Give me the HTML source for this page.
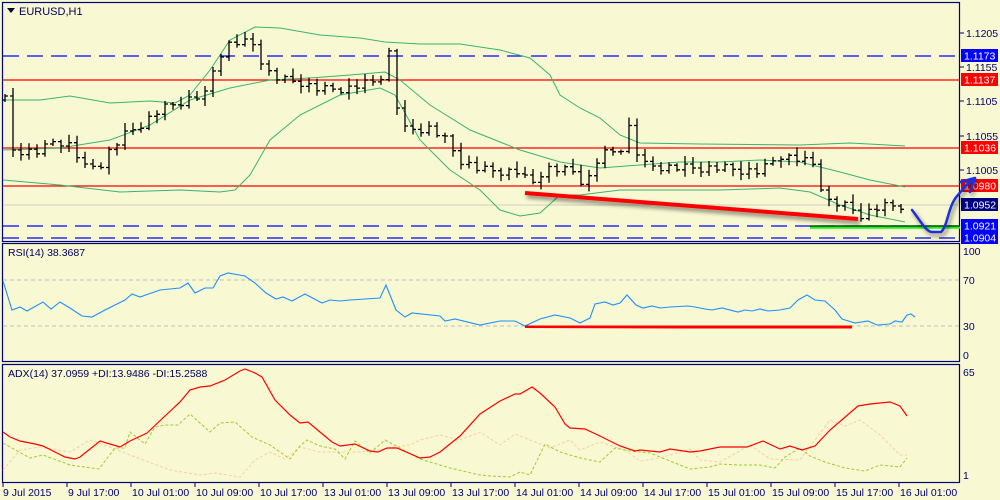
<!DOCTYPE html>
<html><head><meta charset="utf-8"><style>
html,body{margin:0;padding:0;background:#f8f8d2;}
svg{display:block;font-family:"Liberation Sans",sans-serif;}
</style></head><body>
<svg id="s" width="1000" height="500" viewBox="0 0 1000 500" xmlns="http://www.w3.org/2000/svg">
<rect width="1000" height="500" fill="#f8f8d2"/>
<defs><filter id="sh" x="-5%" y="-50%" width="110%" height="300%"><feGaussianBlur in="SourceAlpha" stdDeviation="2"/><feOffset dx="2" dy="3"/><feComponentTransfer><feFuncA type="linear" slope="0.5"/></feComponentTransfer><feMerge><feMergeNode/><feMergeNode in="SourceGraphic"/></feMerge></filter></defs>
<g fill="none" stroke="#00007f" stroke-width="1.2">
<rect x="2.5" y="2.5" width="957" height="239"/>
<rect x="2.5" y="243.5" width="957" height="118"/>
<rect x="2.5" y="364.5" width="957" height="118"/>
</g>
<line x1="3" y1="205" x2="959" y2="205" stroke="#d0d0c0" stroke-width="1"/>
<g stroke="#0000ff" stroke-width="1.3" stroke-dasharray="16,8">
<line x1="3" y1="56" x2="959" y2="56"/>
<line x1="3" y1="226" x2="959" y2="226"/>
<line x1="3" y1="238" x2="959" y2="238"/>
</g>
<g stroke="#ff0000" stroke-width="1.3">
<line x1="3" y1="80" x2="959" y2="80"/>
<line x1="3" y1="148" x2="959" y2="148"/>
<line x1="3" y1="186" x2="959" y2="186"/>
</g>
<g id="bb" fill="none" stroke="#3cb371" stroke-width="1"></g>
<g id="bars" stroke="#000" stroke-width="1.3" fill="none"></g>
<g stroke="#c0c0c0" stroke-dasharray="4,3" stroke-width="1">
<line x1="3" y1="280" x2="959" y2="280"/>
<line x1="3" y1="326" x2="959" y2="326"/>
</g>
<polyline id="rsi" fill="none" stroke="#1e90ff" stroke-width="1.1"/>
<polyline id="mdi" fill="none" stroke="#f6d0a8" stroke-width="1" stroke-dasharray="3,2"/>
<polyline id="pdi" fill="none" stroke="#9acd32" stroke-width="1" stroke-dasharray="3,2"/>
<polyline id="adx" fill="none" stroke="#ff0000" stroke-width="1.2"/>
<line x1="525" y1="193" x2="858" y2="219" stroke="#ff0000" stroke-width="4" filter="url(#sh)"/>
<line x1="810" y1="227" x2="960" y2="227" stroke="#22ee22" stroke-width="3.5"/>
<line x1="810" y1="226" x2="960" y2="226" stroke="#000" stroke-width="1"/>
<line x1="525" y1="326" x2="852" y2="327" stroke="#ff0000" stroke-width="4" filter="url(#sh)"/>
<path d="M7,8 L15,8 L11,13 Z" fill="#000040"/>
<text x="19" y="15" font-size="11" fill="#000060">EURUSD,H1</text>
<text x="8" y="256" font-size="10.5" fill="#000060">RSI(14) 38.3687</text>
<text x="8" y="377" font-size="10.5" fill="#000060">ADX(14) 37.0959 +DI:13.9486 -DI:15.2588</text>
<g font-size="10.5" fill="#000070">
<g stroke="#000070"><line x1="960" y1="33" x2="964" y2="33"/><line x1="960" y1="67" x2="964" y2="67"/><line x1="960" y1="101" x2="964" y2="101"/><line x1="960" y1="136" x2="964" y2="136"/><line x1="960" y1="170" x2="964" y2="170"/></g>
<text x="966" y="37">1.1205</text>
<text x="966" y="71">1.1155</text>
<text x="966" y="105">1.1105</text>
<text x="966" y="140">1.1055</text>
<text x="966" y="174">1.1005</text>
</g>
<g font-size="10.5" fill="#fff">
<rect x="961" y="49" width="37" height="13" fill="#0000ff"/><text x="964" y="59.5">1.1173</text>
<rect x="961" y="73" width="37" height="13" fill="#ff0000"/><text x="964" y="83.5">1.1137</text>
<rect x="961" y="141" width="37" height="13" fill="#ff0000"/><text x="964" y="151.5">1.1036</text>
<rect x="961" y="179" width="37" height="13" fill="#ff0000"/><text x="964" y="189.5">1.0980</text>
<rect x="961" y="198" width="37" height="13" fill="#000080"/><text x="964" y="208.5">1.0952</text>
<rect x="961" y="219" width="37" height="13" fill="#0000ff"/><text x="964" y="229.5">1.0921</text>
<rect x="961" y="231" width="37" height="13" fill="#0000ff"/><text x="964" y="241.5">1.0904</text>
</g>
<path d="M912,210 C920,220 926,232 932,232 L941,232 C948,226 948,205 958,195 C964,188 968,182 975,178 M963,188 L975,178 L960,182 M975,178 L970,192" fill="none" stroke="#1a2ee0" stroke-width="2.5" stroke-linecap="round" filter="url(#sh)"/>
<g font-size="10.5" fill="#000070">
<text x="963" y="255">100</text><text x="963" y="284">70</text><text x="963" y="330">30</text><text x="963" y="359">0</text>
<text x="963" y="376">65</text><text x="963" y="479">1</text>
</g>
<g id="tax" font-size="10.5" fill="#000070"></g>
</svg>
<script>
var NS="http://www.w3.org/2000/svg";
function el(t,a,p){var e=document.createElementNS(NS,t);for(var k in a)e.setAttribute(k,a[k]);(p||document.getElementById("s")).appendChild(e);return e;}
function pts(a){return a.map(function(p){return p[0]+","+p[1]}).join(" ");}
function interp(A,x){for(var i=0;i<A.length-1;i++){if(x<=A[i+1][0]){var t=(x-A[i][0])/(A[i+1][0]-A[i][0]);return A[i][1]+t*(A[i+1][1]-A[i][1]);}}return A[A.length-1][1];}
var bb=document.getElementById("bb");
var up=[[3,100],[40,100],[70,96],[110,103],[150,101],[175,103],[190,95],[210,70],[230,40],[255,27],[280,28],[320,35],[360,38],[385,42],[420,44],[460,44],[500,50],[530,58],[550,75],[560,95],[580,108],[600,118],[620,135],[640,143],[700,144],[800,145],[850,143],[905,146]];
var md=[[3,150],[60,148],[110,140],[150,125],[190,100],[230,88],[270,80],[310,78],[350,75],[385,72],[400,80],[430,105],[470,130],[520,150],[560,162],[600,168],[640,165],[680,162],[720,162],[760,160],[800,162],[840,172],[870,180],[905,187]];
var lo=[[3,180],[60,185],[120,192],[180,190],[220,192],[235,190],[250,175],[270,140],[300,115],[340,95],[380,88],[395,95],[420,140],[450,170],[480,190],[500,210],[520,216],[540,213],[560,195],[580,195],[620,190],[660,190],[720,190],[780,188],[810,192],[840,205],[870,215],[905,222]];
[up,md,lo].forEach(function(a){el("polyline",{points:pts(a)},bb);});
var cl=[[5,100],[13,150],[40,152],[55,140],[70,145],[85,168],[100,165],[110,150],[125,135],[140,125],[160,110],[185,100],[205,95],[215,65],[225,45],[240,42],[255,45],[265,70],[280,80],[300,82],[320,90],[350,88],[380,80],[388,45],[395,100],[405,130],[430,128],[445,140],[460,160],[480,170],[520,172],[530,186],[545,168],[575,172],[585,186],[600,155],[620,150],[630,125],[640,165],[680,168],[720,168],[760,172],[780,155],[800,160],[815,165],[825,200],[850,208],[860,215],[880,207],[905,205]];
var bars=document.getElementById("bars");var prev=100;
for(var x=5,i=0;x<=906;x+=8,i++){var c=interp(cl,x)+((i*7)%5-2)*2;var o=prev;var h=Math.min(o,c)-2-(i*13)%7;var l=Math.max(o,c)+2+(i*11)%6;
el("path",{d:"M"+x+","+h.toFixed(1)+"V"+l.toFixed(1)+"M"+(x-3)+","+o.toFixed(1)+"H"+x+"M"+x+","+c.toFixed(1)+"H"+(x+3)},bars);prev=c;}
document.getElementById("rsi").setAttribute("points",pts([[3,281],[12,310],[20,307],[27,311],[43,302],[51,309],[60,302],[70,308],[82,316],[92,317],[105,310],[125,300],[132,294],[140,297],[160,290],[180,288],[188,283],[195,293],[205,288],[213,288],[220,276],[228,273],[245,276],[255,283],[266,293],[276,299],[283,297],[292,301],[305,294],[322,303],[330,300],[340,301],[350,300],[380,298],[386,285],[396,310],[405,317],[412,313],[440,316],[445,321],[455,319],[480,325],[500,321],[515,321],[525,326],[540,319],[555,315],[570,318],[580,323],[590,318],[595,304],[605,302],[613,305],[620,303],[627,295],[636,305],[643,308],[652,306],[660,308],[670,307],[688,306],[695,307],[705,309],[712,310],[722,308],[738,312],[745,310],[752,311],[760,309],[768,311],[780,310],[790,308],[798,300],[807,295],[815,300],[825,301],[835,310],[842,319],[855,323],[868,321],[877,325],[890,324],[895,321],[902,322],[907,315],[911,314],[915,317]]));
document.getElementById("adx").setAttribute("points",pts([[3,432],[10,437],[20,441],[35,444],[43,446],[55,452],[65,457],[75,459],[80,457],[90,449],[100,441],[110,444],[120,447],[130,441],[147,433],[165,416],[180,402],[190,390],[200,387],[210,386],[225,380],[240,371],[245,369],[255,373],[262,377],[275,400],[290,415],[300,423],[308,422],[320,432],[332,442],[340,446],[355,444],[370,451],[378,452],[387,448],[397,448],[420,458],[430,457],[440,452],[460,436],[480,414],[500,401],[515,394],[520,394],[532,387],[540,393],[555,407],[565,424],[570,428],[585,429],[600,436],[620,446],[635,451],[640,450],[660,452],[670,449],[690,452],[700,451],[720,447],[747,447],[763,441],[780,449],[790,446],[802,450],[815,446],[830,430],[858,406],[870,404],[890,402],[900,406],[907,416]]));
document.getElementById("pdi").setAttribute("points",pts([[3,443],[30,458],[43,455],[70,465],[99,469],[115,448],[125,448],[130,432],[145,444],[155,427],[165,425],[178,425],[190,414],[210,432],[220,423],[235,422],[252,437],[270,445],[290,459],[300,446],[307,440],[320,446],[335,449],[345,459],[355,441],[370,453],[385,440],[400,448],[420,459],[450,468],[480,475],[490,476],[510,477],[520,472],[530,475],[545,444],[560,452],[580,458],[595,461],[600,462],[615,448],[630,451],[650,453],[670,461],[690,469],[700,468],[710,467],[720,464],[740,465],[760,465],[775,468],[785,457],[800,448],[810,456],[825,462],[845,468],[865,471],[880,465],[900,467],[907,458]]));
document.getElementById("mdi").setAttribute("points",pts([[3,470],[20,450],[40,447],[70,452],[90,440],[110,447],[130,455],[170,470],[200,475],[215,473],[240,477],[255,460],[270,452],[285,459],[300,447],[320,452],[360,452],[380,450],[395,447],[410,445],[420,440],[440,435],[460,440],[470,436],[480,432],[500,445],[515,434],[530,440],[550,448],[570,440],[580,450],[600,442],[625,450],[640,461],[660,458],[690,449],[700,460],[720,462],[750,445],[770,459],[800,460],[815,440],[830,420],[845,426],[860,420],[880,435],[900,455],[907,455]]));
var tax=document.getElementById("tax");
var labs=["9 Jul 2015","9 Jul 17:00","10 Jul 01:00","10 Jul 09:00","10 Jul 17:00","13 Jul 01:00","13 Jul 09:00","13 Jul 17:00","14 Jul 01:00","14 Jul 09:00","14 Jul 17:00","15 Jul 01:00","15 Jul 09:00","15 Jul 17:00","16 Jul 01:00"];
labs.forEach(function(t,i){var x=3+64*i;el("line",{x1:x,y1:483,x2:x,y2:487,stroke:"#000070"},tax);var e=el("text",{x:x+(i?1:0),y:496},tax);e.textContent=t;});
</script>
</body></html>
